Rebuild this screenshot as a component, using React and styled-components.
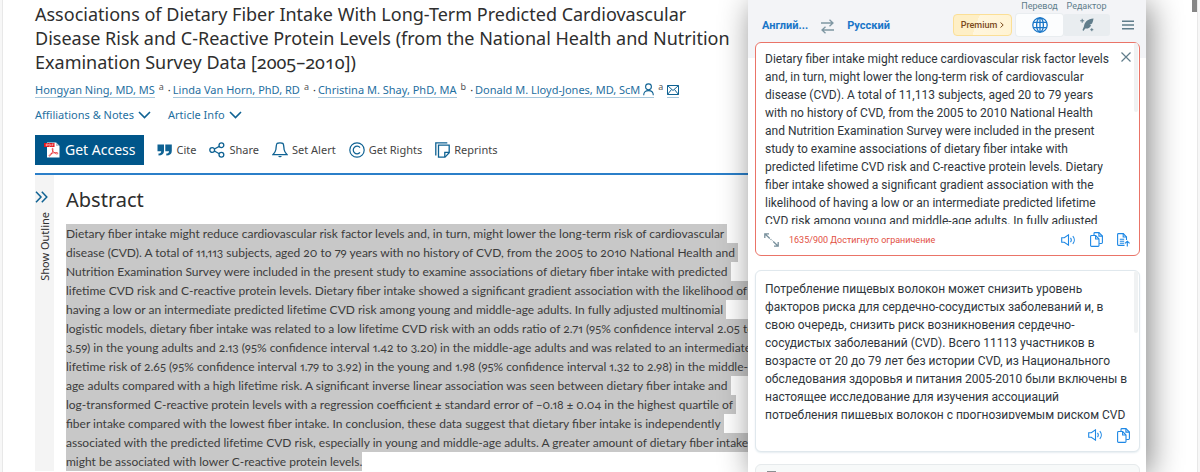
import React from "react";
import styled, { createGlobalStyle, css } from "styled-components";

const GlobalStyle = createGlobalStyle`
    * {
        box-sizing: border-box;
    }

    body {
        margin: 0;
        background: #f7f7f7;
        color: #2e2e2e;
        font-family: "Noto Sans", "Open Sans", sans-serif;
        font-size: 11px;
        line-height: 16px;
        font-variant-numeric: oldstyle-nums;
        overflow: hidden;
    }

    button {
        border: 0;
        padding: 0;
        background: none;
        font: inherit;
        color: inherit;
        cursor: pointer;
    }

    svg {
        display: block;
        flex: none;
    }
`;

const Page = styled.div`
    position: relative;
    min-height: 100vh;
    margin: 0 2px;
    border: solid #e8e8e8;
    border-width: 0 1px;
    background: #fff;
    overflow: hidden;
`;

const Article = styled.main`
    width: 63%;
    padding: 2px 0 0 32px;
    white-space: nowrap;
`;

const Title = styled.h1`
    margin: 0 0 8px;
    font-size: 18px;
    line-height: 24px;
    font-weight: 400;
`;

const Authors = styled.div`
    display: flex;
    gap: 2px;
    margin-bottom: 9px;
`;

const Author = styled.span`
    display: flex;
    gap: 4px;
    height: 16px;
`;

const AuthorLink = styled.a`
    display: flex;
    align-items: center;
    gap: 3px;
    height: 16px;
    border-bottom: 1px solid #a9c8dc;
    color: #1f6f9f;
    text-decoration: none;
`;

const Affiliation = styled.sup`
    font-size: 9px;
    line-height: 10px;
    color: #555;
`;

const Toggles = styled.div`
    display: flex;
    gap: 17px;
    margin-bottom: 12px;
`;

const Toggle = styled.button`
    display: flex;
    align-items: center;
    gap: 4px;
    height: 16px;
    color: #1f6f9f;
`;

const Toolbar = styled.div`
    display: flex;
    align-items: center;
    gap: 13px;
    padding-bottom: 8px;
    border-bottom: 2px solid #2b7fc9;
`;

const AccessButton = styled.button`
    display: flex;
    align-items: center;
    gap: 5px;
    height: 30px;
    padding: 0 9px;
    background: #00568a;
    color: #fff;
    font-size: 14px;
`;

const ToolButton = styled.button`
    display: flex;
    align-items: center;
    gap: 4px;
    color: #444;
`;

const Content = styled.div`
    display: flex;
`;

const OutlineBar = styled.aside`
    flex: none;
    width: 19px;
    padding-top: 16px;
    background: #f4f4f4;
`;

const OutlineButton = styled.button`
    display: flex;
    flex-direction: column;
    align-items: flex-start;
    gap: 9px;
`;

const OutlineLabel = styled.span`
    margin-left: 2px;
    writing-mode: vertical-rl;
    transform: rotate(180deg);
`;

const Section = styled.section`
    padding: 13px 0 0 12px;
`;

const Heading = styled.h2`
    margin: 0 0 12px;
    font-size: 20px;
    line-height: 24px;
    font-weight: 400;
`;

const Abstract = styled.p`
    margin: 0;
    font-family: Lato, sans-serif;
    font-size: 12px;
    font-feature-settings: "onum" 1, "pnum" 1;
    line-height: 19px;
    color: #3c3c3c;
`;

const SelectedLine = styled.span`
    display: block;
    width: fit-content;
    padding-right: 3px;
    background: #c8c8c8;

    &:last-child {
        padding-right: 0;
    }
`;

const ScrollThumb = styled.div`
    position: absolute;
    top: 0;
    right: 0;
    width: 5px;
    height: 12px;
    background: #868686;
`;

const Popup = styled.div`
    position: absolute;
    top: 0;
    bottom: 0;
    right: 51px;
    width: 398px;
    padding: 0 6px 0 7px;
    background: linear-gradient(#f3f4f7 58px, #fff 58px);
    box-shadow: 4px 4px 30px rgba(0, 0, 0, 0.48);
    overflow: hidden;
    font-family: Roboto, sans-serif;
    font-variant-numeric: normal;
    color: #2f363c;
`;

const PopupHeader = styled.header`
    display: flex;
    align-items: flex-end;
    height: 42px;
    padding: 0 6px 6px 7px;
    font-size: 9px;
    line-height: 12px;
    color: #607d8b;
`;

const Languages = styled.div`
    display: flex;
    align-items: center;
    gap: 13px;
    height: 20px;
    margin-right: auto;
`;

const LanguageButton = styled.button`
    white-space: nowrap;
    color: #1976c8;
    font-size: 11px;
    line-height: 18px;
    font-weight: 700;
`;

const PremiumButton = styled.button`
    display: flex;
    align-items: center;
    justify-content: center;
    gap: 3px;
    width: 59px;
    height: 22px;
    margin-right: 4px;
    border: 1px solid #fbdf96;
    border-radius: 4px;
    background: linear-gradient(110deg, #feefc6 40%, #fff6de 40%, #fff3d2);
    color: #7a4a1c;
    font-weight: 500;
`;

const Mode = styled.div`
    display: flex;
    flex-direction: column;
    align-items: center;
    gap: 2px;
    width: 47px;
`;

const ModeButton = styled.button`
    display: flex;
    align-items: center;
    justify-content: center;
    width: 100%;
    height: 22px;
    border-radius: 3px;
    background: #e9edf0;

    ${(props) =>
        props.$active &&
        css`
            background: #fcfdfe;
            box-shadow: 0 0 0 1px #e9edf0;
        `}
`;

const IconButton = styled.button`
    display: flex;
    align-items: center;
    justify-content: center;
    min-width: 12px;
    height: 22px;
`;

const MenuButton = styled(IconButton)`
    margin-left: 12px;
`;

const Card = styled.section`
    margin-bottom: 14px;
    border: 1px solid ${(props) => (props.$error ? "#ea7468" : "#e0e8ed")};
    border-radius: 6px;
    background: #fff;
    box-shadow: ${(props) => (props.$error ? "none" : "0 1px 2px #e6edf1")};
`;

const CardBody = styled.div`
    display: flex;
    align-items: flex-start;
    justify-content: space-between;
    padding-right: 1px;
`;

const SourceText = styled.textarea`
    flex: 1;
    min-width: 0;
    height: 174px;
    margin: 7px 0 0;
    padding: 0 0 0 9px;
    border: 0;
    outline: 0;
    resize: none;
    overflow: hidden;
    background: none;
    color: inherit;
    font: 12px / 18px Roboto, sans-serif;
    white-space: pre;
`;

const ResultText = styled.div`
    height: 139px;
    margin-top: 9px;
    padding-left: 9px;
    overflow: hidden;
    font-size: 12px;
    line-height: 18px;
    white-space: pre;
`;

const CloseButton = styled(IconButton)`
    margin: 3px 2px 0 0;
`;

const ScrollTrack = styled.div`
    width: 4px;
    height: ${(props) => props.$height}px;
    border-radius: 2px;
    background: #f0f2f3;
`;

const CardFooter = styled.footer`
    display: flex;
    align-items: center;
    justify-content: flex-end;
    gap: 14px;
    height: ${(props) => (props.$tall ? 31 : 32)}px;
    padding: 0 9px 0 8px;
`;

const Status = styled.div`
    display: flex;
    align-items: center;
    gap: 10px;
    margin-right: auto;
`;

const LimitText = styled.span`
    color: #e2503f;
    font-size: 9px;
    line-height: 12px;
`;

const ExtraCard = styled.div`
    display: flex;
    align-items: center;
    height: 28px;
    padding: 0 9px;
    margin-top: -2px;
    border: 1px solid #e6eaec;
    border-radius: 6px;
    background: #f7f9f9;
`;

const authors = [
    { name: "Hongyan Ning, MD, MS", note: "a" },
    { name: "Linda Van Horn, PhD, RD", note: "a" },
    { name: "Christina M. Shay, PhD, MA", note: "b" },
    { name: "Donald M. Lloyd-Jones, MD, ScM", note: "a", contact: true },
];

const abstractLines = [
    "Dietary fiber intake might reduce cardiovascular risk factor levels and, in turn, might lower the long-term risk of cardiovascular",
    "disease (CVD). A total of 11,113 subjects, aged 20 to 79 years with no history of CVD, from the 2005 to 2010 National Health and",
    "Nutrition Examination Survey were included in the present study to examine associations of dietary fiber intake with predicted",
    "lifetime CVD risk and C-reactive protein levels. Dietary fiber intake showed a significant gradient association with the likelihood of",
    "having a low or an intermediate predicted lifetime CVD risk among young and middle-age adults. In fully adjusted multinomial",
    "logistic models, dietary fiber intake was related to a low lifetime CVD risk with an odds ratio of 2.71 (95% confidence interval 2.05 to",
    "3.59) in the young adults and 2.13 (95% confidence interval 1.42 to 3.20) in the middle-age adults and was related to an intermediate",
    "lifetime risk of 2.65 (95% confidence interval 1.79 to 3.92) in the young and 1.98 (95% confidence interval 1.32 to 2.98) in the middle-",
    "age adults compared with a high lifetime risk. A significant inverse linear association was seen between dietary fiber intake and",
    "log-transformed C-reactive protein levels with a regression coefficient ± standard error of −0.18 ± 0.04 in the highest quartile of",
    "fiber intake compared with the lowest fiber intake. In conclusion, these data suggest that dietary fiber intake is independently",
    "associated with the predicted lifetime CVD risk, especially in young and middle-age adults. A greater amount of dietary fiber intake",
    "might be associated with lower C-reactive protein levels.",
];

const sourceText = `Dietary fiber intake might reduce cardiovascular risk factor levels
and, in turn, might lower the long-term risk of cardiovascular
disease (CVD). A total of 11,113 subjects, aged 20 to 79 years
with no history of CVD, from the 2005 to 2010 National Health
and Nutrition Examination Survey were included in the present
study to examine associations of dietary fiber intake with
predicted lifetime CVD risk and C-reactive protein levels. Dietary
fiber intake showed a significant gradient association with the
likelihood of having a low or an intermediate predicted lifetime
CVD risk among young and middle-age adults. In fully adjusted`;

const resultText = `Потребление пищевых волокон может снизить уровень
факторов риска для сердечно-сосудистых заболеваний и, в
свою очередь, снизить риск возникновения сердечно-
сосудистых заболеваний (CVD). Всего 11113 участников в
возрасте от 20 до 79 лет без истории CVD, из Национального
обследования здоровья и питания 2005-2010 были включены в
настоящее исследование для изучения ассоциаций
потребления пищевых волокон с прогнозируемым риском CVD`;

const BLUE = "#0f6293";
const SKY = "#1e88e5";
const SLATE = "#607d8b";

const ChevronIcon = () => (
    <svg width="13" height="8" viewBox="0 0 13 8" fill="none" stroke={BLUE} strokeWidth="1.6">
        <path d="M1 1l5.5 5.5L12 1" />
    </svg>
);

const PersonIcon = () => (
    <svg width="11" height="13" viewBox="0 0 11 13" fill="none" stroke={BLUE} strokeWidth="1.1">
        <circle cx="5.5" cy="3.8" r="2.9" />
        <path d="M.7 12.2c0-3.2 2-4.6 4.8-4.6s4.8 1.4 4.8 4.6" />
    </svg>
);

const MailIcon = () => (
    <svg width="12" height="10" viewBox="0 0 12 10" fill="none" stroke={BLUE}>
        <path d="M.5.5h11v9H.5zM.5.5L6 5.5l5.5-5M.5 9.5l4-5M11.5 9.5l-4-5" />
    </svg>
);

const PdfIcon = () => (
    <svg width="16" height="16" viewBox="0 0 16 16">
        <path d="M3 .5h9l3.5 3.5v11.5H3z" fill="#fff" />
        <path d="M12 .5V4h3.5z" fill="#b9c4cc" />
        <path d="M0 1h10.5v4H0z" fill="#e2151b" />
        <path d="M2.2 4.3V2h1c1.4 0 1.4 1.3 0 1.3H2.2M5 2v2.2h.5c1.5 0 1.5-2.2 0-2.2zM8 4.3V2h1.6M8 3.1h1.3" fill="none" stroke="#fff" strokeWidth=".5" />
        <path d="M8.6 6.3c-1.3 0 .2 3.2 2.3 4.9 1.7 1.2 3.2.8 3-.1-.4-1-3.4-.7-5.3 0-2.3.8-3.8 2-3.5 2.8.8.9 2.5-1.8 3.3-4 .5-1.8.9-3.6.2-3.6z" fill="none" stroke="#e2151b" strokeWidth=".7" />
    </svg>
);

const CiteIcon = () => (
    <svg width="15" height="12" viewBox="0 0 15 12" fill={BLUE}>
        <path d="M.5.5H7V7c0 2.8-1.9 4.5-5.5 4.5v-2c1.8 0 2.7-.8 2.7-2.3H.5zM8.3.5h6.5V7c0 2.8-1.9 4.5-5.5 4.5v-2c1.8 0 2.7-.8 2.7-2.3H8.3z" />
    </svg>
);

const ShareIcon = () => (
    <svg width="16" height="16" viewBox="0 0 16 16" fill="none" stroke={BLUE} strokeWidth="1.3">
        <circle cx="3.2" cy="8" r="2.4" />
        <circle cx="12.4" cy="3.2" r="2.4" />
        <circle cx="12.4" cy="12.8" r="2.4" />
        <path d="M5.4 7l4.9-2.6M5.4 9l4.9 2.7" />
    </svg>
);

const BellIcon = () => (
    <svg width="16" height="16" viewBox="0 0 16 16" fill="none" stroke={BLUE} strokeWidth="1.3">
        <path d="M5 1.5C5.5.8 6.5.8 8 .8s2.5 0 3 .7c.9 1.3.8 3.5 1.1 6 .2 1.8 1.4 3.4 3 5.2H.9c1.6-1.8 2.8-3.4 3-5.2.3-2.5.2-4.7 1.1-6z" />
        <path d="M5.8 14h4.4L8 15.6z" fill={BLUE} stroke="none" />
    </svg>
);

const RightsIcon = () => (
    <svg width="16" height="16" viewBox="0 0 16 16" fill="none" stroke={BLUE} strokeWidth="1.2">
        <circle cx="8" cy="8" r="7.2" />
        <path d="M11 5.6A3.8 3.8 0 1 0 11 10.4" />
    </svg>
);

const ReprintsIcon = () => (
    <svg width="15" height="16" viewBox="0 0 15 16" fill="none" stroke={BLUE} strokeWidth="1.3">
        <path d="M.8 13.5V.8h11.5" />
        <path d="M3.5 3.2h10.7v7.5L10 15.1H3.5z" />
        <path d="M14.2 10.4H9.8v4.7" />
    </svg>
);

const DoubleArrowIcon = () => (
    <svg width="13" height="12" viewBox="0 0 13 12" fill="none" stroke={BLUE} strokeWidth="1.5">
        <path d="M1 .8L6 6l-5 5.2M6.8.8l5 5.2-5 5.2" />
    </svg>
);

const SwapIcon = () => (
    <svg width="13" height="15" viewBox="0 0 13 15" fill="none" stroke="#7f97a3" strokeWidth="1.3">
        <path d="M0 4h12M8.5.7L12 4 8.5 7.3M13 11H1M4.5 7.7L1 11l3.5 3.3" />
    </svg>
);

const ArrowIcon = () => (
    <svg width="4" height="8" viewBox="0 0 4 8" fill="none" stroke="#7a4a1c">
        <path d="M.5 1.5L3.2 4 .5 6.5" />
    </svg>
);

const GlobeIcon = () => (
    <svg width="16" height="16" viewBox="0 0 16 16" fill="none" stroke="#1976c8" strokeWidth="1.3">
        <circle cx="8" cy="8" r="7.2" />
        <ellipse cx="8" cy="8" rx="3.4" ry="7.2" />
        <path d="M8 .8v14.4M1.6 5.3h12.8M1.6 10.7h12.8" />
    </svg>
);

const FeatherIcon = () => (
    <svg width="14" height="14" viewBox="0 0 14 14" fill={SLATE}>
        <path d="M13.5.5C8 1 4.5 3.7 4 8.3L2.5 12l.8 1 2-2.4c3.2.2 5-1.3 5.9-3.4L9.5 7l2.6-1.5c.8-1.5 1.2-3.2 1.4-5z" />
        <path d="M2.2.8v4M.2 2.8h4M11.8 10.2v3M10.3 11.7h3" fill="none" stroke={SLATE} />
    </svg>
);

const MenuIcon = () => (
    <svg width="12" height="10" viewBox="0 0 12 10" stroke={SLATE} strokeWidth="1.4">
        <path d="M0 1.2h12M0 5h12M0 8.8h12" />
    </svg>
);

const CloseIcon = () => (
    <svg width="10" height="10" viewBox="0 0 10 10" stroke={SLATE} strokeWidth="1.2">
        <path d="M.5.5l9 9M9.5.5l-9 9" />
    </svg>
);

const ExpandIcon = () => (
    <svg width="15" height="14" viewBox="0 0 15 14" fill="none" stroke="#78909c" strokeWidth="1.3">
        <path d="M.8 5V.8H5M.8.8l5 4.6M14.2 9v4.2H10M14.2 13.2l-5-4.6" />
        <path d="M6.6 6.1l1.8 1.7" strokeDasharray="1 1" />
    </svg>
);

const SpeakerIcon = () => (
    <svg width="15" height="12" viewBox="0 0 15 12" fill="none" stroke={SKY} strokeWidth="1.1">
        <path d="M.7 3.8h2.6L7.5.9v10.2L3.3 8.2H.7zM9.5 3.9c.9 1.2.9 3 0 4.2M11.8 2.2c2 2.2 2 5.4 0 7.6" />
    </svg>
);

const CopyIcon = () => (
    <svg width="13" height="15" viewBox="0 0 13 15" fill="none" stroke={SKY} strokeWidth="1.1">
        <path d="M4 3.2V1.5c0-.6.3-.9.9-.9h4l3.5 3.5v6.5c0 .6-.3.9-.9.9H9.2" />
        <path d="M8.9.6v3.5h3.5" />
        <path d="M1.5 3.5h4.2L9 7v6.5c0 .6-.3.9-.9.9H1.5c-.6 0-.9-.3-.9-.9V4.4c0-.6.3-.9.9-.9z" />
        <path d="M5.6 3.5V7H9" />
    </svg>
);

const FileIcon = () => (
    <svg width="13" height="14" viewBox="0 0 13 14" fill="none" stroke={SKY} strokeWidth="1.1">
        <path d="M7.5 12.4h-6c-.6 0-.9-.3-.9-.9v-10c0-.6.3-.9.9-.9h4.8L9.5 4v3" />
        <path d="M6.2.6V4h3.3M2.8 6.2h4.4M2.8 8.2h4.4M2.8 10.2h4.4M10.3 13.5V8.4M8 10.4l2.3-2.2 2.3 2.2" />
    </svg>
);

const SwitchIcon = () => (
    <svg width="9" height="14" viewBox="0 0 9 14" fill="#8b8f92">
        <path d="M0 0h9v2H0zM3.5 2h2v12h-2z" />
    </svg>
);

const tools = [
    { label: "Cite", Icon: CiteIcon },
    { label: "Share", Icon: ShareIcon },
    { label: "Set Alert", Icon: BellIcon },
    { label: "Get Rights", Icon: RightsIcon },
    { label: "Reprints", Icon: ReprintsIcon },
];

const ArticleView = () => (
    <Article>
        <Title>
            Associations of Dietary Fiber Intake With Long-Term Predicted Cardiovascular
            <br />
            Disease Risk and C-Reactive Protein Levels (from the National Health and Nutrition
            <br />
            Examination Survey Data [2005–2010])
        </Title>
        <Authors>
            {authors.map(({ name, note, contact }) => (
                <Author key={name}>
                    <AuthorLink href="#">
                        {name}
                        {contact ? <PersonIcon /> : null}
                    </AuthorLink>
                    <Affiliation>{note}</Affiliation>
                    {contact ? (
                        <AuthorLink href="#" aria-label="Email">
                            <MailIcon />
                        </AuthorLink>
                    ) : (
                        <span>·</span>
                    )}
                </Author>
            ))}
        </Authors>
        <Toggles>
            <Toggle>
                Affiliations &amp; Notes
                <ChevronIcon />
            </Toggle>
            <Toggle>
                Article Info
                <ChevronIcon />
            </Toggle>
        </Toggles>
        <Toolbar>
            <AccessButton>
                <PdfIcon />
                Get Access
            </AccessButton>
            {tools.map(({ label, Icon }) => (
                <ToolButton key={label}>
                    <Icon />
                    {label}
                </ToolButton>
            ))}
        </Toolbar>
        <Content>
            <OutlineBar>
                <OutlineButton>
                    <DoubleArrowIcon />
                    <OutlineLabel>Show Outline</OutlineLabel>
                </OutlineButton>
            </OutlineBar>
            <Section>
                <Heading>Abstract</Heading>
                <Abstract>
                    {abstractLines.map((line) => (
                        <SelectedLine key={line}>{line}</SelectedLine>
                    ))}
                </Abstract>
            </Section>
        </Content>
    </Article>
);

const Translator = () => (
    <Popup>
        <PopupHeader>
            <Languages>
                <LanguageButton>Англий...</LanguageButton>
                <IconButton aria-label="Swap languages">
                    <SwapIcon />
                </IconButton>
                <LanguageButton>Русский</LanguageButton>
            </Languages>
            <PremiumButton>
                Premium
                <ArrowIcon />
            </PremiumButton>
            <Mode>
                <span id="mode-translate">Перевод</span>
                <ModeButton $active aria-labelledby="mode-translate">
                    <GlobeIcon />
                </ModeButton>
            </Mode>
            <Mode>
                <span id="mode-editor">Редактор</span>
                <ModeButton aria-labelledby="mode-editor">
                    <FeatherIcon />
                </ModeButton>
            </Mode>
            <MenuButton aria-label="Menu">
                <MenuIcon />
            </MenuButton>
        </PopupHeader>
        <Card $error>
            <CardBody>
                <SourceText aria-label="Source text" defaultValue={sourceText} spellCheck={false} />
                <CloseButton aria-label="Clear">
                    <CloseIcon />
                </CloseButton>
                <ScrollTrack $height={69} />
            </CardBody>
            <CardFooter $tall>
                <Status>
                    <IconButton aria-label="Expand">
                        <ExpandIcon />
                    </IconButton>
                    <LimitText>1635/900 Достигнуто ограничение</LimitText>
                </Status>
                <IconButton aria-label="Listen to source">
                    <SpeakerIcon />
                </IconButton>
                <IconButton aria-label="Copy source">
                    <CopyIcon />
                </IconButton>
                <IconButton aria-label="Upload file">
                    <FileIcon />
                </IconButton>
            </CardFooter>
        </Card>
        <Card>
            <CardBody>
                <ResultText>{resultText}</ResultText>
                <ScrollTrack $height={62} />
            </CardBody>
            <CardFooter>
                <IconButton aria-label="Listen to translation">
                    <SpeakerIcon />
                </IconButton>
                <IconButton aria-label="Copy translation">
                    <CopyIcon />
                </IconButton>
            </CardFooter>
        </Card>
        <ExtraCard>
            <IconButton aria-label="Text options">
                <SwitchIcon />
            </IconButton>
        </ExtraCard>
    </Popup>
);

function App() {
    return (
        <Page>
            <GlobalStyle />
            <ArticleView />
            <Translator />
            <ScrollThumb />
        </Page>
    );
}

export default App;
